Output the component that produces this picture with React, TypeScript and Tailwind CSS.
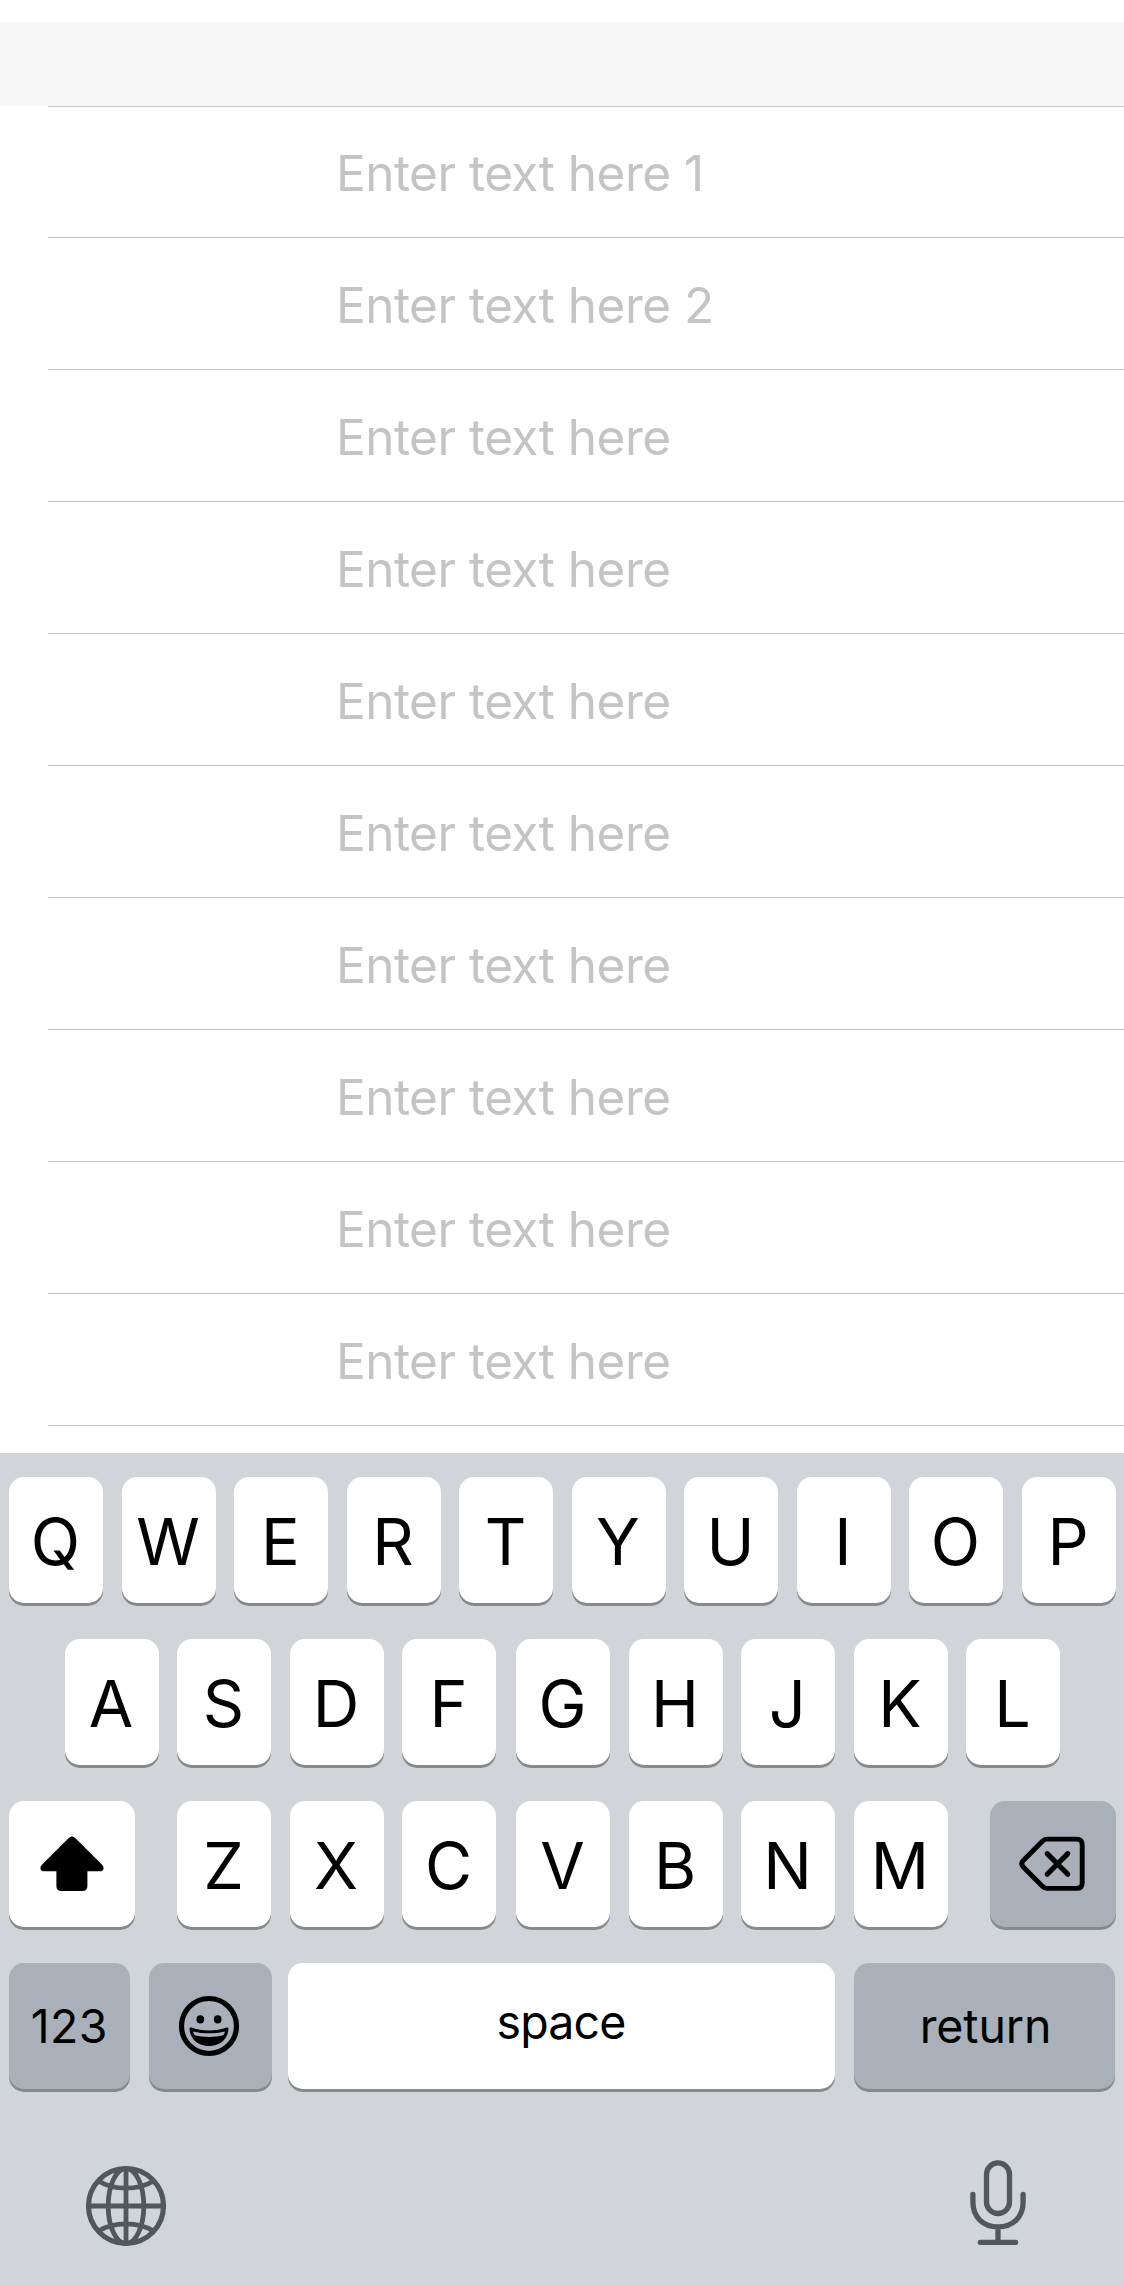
import type { ReactNode } from "react";

const placeholders = [
  "Enter text here 1",
  "Enter text here 2",
  ...Array.from({ length: 8 }, () => "Enter text here"),
];

function Key({
  children,
  className = "",
  dark = false,
}: {
  children: ReactNode;
  className?: string;
  dark?: boolean;
}) {
  return (
    <button
      type="button"
      className={`flex h-[126px] shrink-0 items-center justify-center rounded-[15px] text-black shadow-[0_3px_0_#88898d] ${
        dark ? "bg-[#aab0ba]" : "bg-white"
      } ${className}`}
    >
      {children}
    </button>
  );
}

function Letter({ char, nudge = false }: { char: string; nudge?: boolean }) {
  return (
    <Key className={nudge ? "ml-[1.5px] w-[94px]" : "w-[94px]"}>
      <span className="pt-[4px] pr-px text-[64.5px] leading-none">{char}</span>
    </Key>
  );
}

function ShiftIcon() {
  return (
    <svg width="64" height="56" viewBox="0 0 64 56" className="-ml-px" aria-hidden="true">
      <path d="M28.5 2.2Q32 -1 35.5 2.2L61.8 28.6C65 32 63.5 35.2 60.5 35.2H47.4V50Q47.4 55 42.4 55H21.4Q16.4 55 16.4 50V35.2H3.5C0.5 35.2 -1 32 2.2 28.6Z" />
    </svg>
  );
}

function BackspaceIcon() {
  return (
    <svg
      width="66"
      height="56"
      viewBox="0 0 66 56"
      fill="none"
      stroke="black"
      strokeWidth="4.9"
      strokeLinecap="round"
      strokeLinejoin="round"
      className="-ml-[3px]"
      aria-hidden="true"
    >
      <path d="M28 3.1H57.5Q63.2 3.1 63.2 8.8V46.7Q63.2 52.4 57.5 52.4H28Q25.5 52.4 23.4 50.3L4.3 31Q1.2 27.7 4.3 24.5L23.4 5.2Q25.5 3.1 28 3.1Z" />
      <path d="M28.2 17.6L48.8 38.2M48.8 17.6L28.2 38.2" strokeWidth="5.1" />
    </svg>
  );
}

function EmojiIcon() {
  return (
    <svg width="62" height="62" viewBox="-31 -31 62 62" className="-ml-[2px]" aria-hidden="true">
      <circle r="27.5" fill="none" stroke="black" strokeWidth="5.2" />
      <ellipse cx="-8.7" cy="-6.6" rx="3.8" ry="4.1" />
      <ellipse cx="8.7" cy="-6.6" rx="3.8" ry="4.1" />
      <path
        fillRule="evenodd"
        d="M-17.8 1.6C-7 5.4 7 5.4 17.8 1.6Q19.6 1.3 19.5 3.2C18.5 13.5 11 20 0 20C-11 20 -18.5 13.5 -19.5 3.2Q-19.6 1.3 -17.8 1.6ZM-15.9 5.4Q-15.6 7.5 -14.3 9.3C-6 11.6 6 11.6 14.3 9.3Q15.6 7.5 15.9 5.4C6 8 -6 8 -15.9 5.4Z"
      />
    </svg>
  );
}

function GlobeIcon() {
  return (
    <svg
      width="82"
      height="82"
      viewBox="-41 -41 82 82"
      fill="none"
      stroke="#52565d"
      strokeWidth="4.8"
      aria-hidden="true"
    >
      <circle r="37.5" strokeWidth="5.2" />
      <ellipse rx="17.8" ry="37.5" />
      <path d="M0 -37V37M-37 0H37M-27.5 -25Q-16 -17.8 0 -17.8T27.5 -25M-27.5 25Q-16 17.8 0 17.8T27.5 25" />
    </svg>
  );
}

function MicIcon() {
  return (
    <svg
      width="58"
      height="86"
      viewBox="0 0 58 86"
      fill="none"
      stroke="#52565d"
      strokeWidth="5.3"
      strokeLinecap="round"
      aria-hidden="true"
    >
      <rect x="17.5" y="2.9" width="23" height="50.6" rx="11.5" />
      <path d="M3.9 34.3V42C3.9 57 14 66.8 29 66.8S54.1 57 54.1 42V34.3M29 66.8V82M11.3 82.3H46.7" />
    </svg>
  );
}

export default function App() {
  return (
    <div className="flex h-[2286px] w-[1124px] flex-col overflow-hidden bg-white font-['Inter',sans-serif]">
      <header className="mt-[22px] h-[84px] shrink-0 bg-[#f7f7f7]" />

      <main className="h-[1347px] shrink-0 bg-white">
        <div className="-mb-px ml-12 h-px bg-[#c5c5c7]" />
        {placeholders.map((text, i) => (
          <div
            key={i}
            className="ml-12 flex h-[132px] items-center border-b border-[#c5c5c7] pl-[288px]"
          >
            <input
              aria-label={`Field ${i + 1}`}
              placeholder={text}
              className="w-[700px] bg-transparent pt-[3px] text-[49.5px] leading-[60px] tracking-[-0.53px] outline-none placeholder:text-[#c4c4c6]"
            />
          </div>
        ))}
      </main>

      <section className="flex grow flex-col bg-[#d1d4d9] pt-6">
        <div className="flex flex-col gap-9">
          <div className="flex gap-[18.5px] pl-[9px]">
            {[..."QWERTYUIOP"].map((c) => (
              <Letter key={c} char={c} />
            ))}
          </div>
          <div className="flex gap-[18.5px] pl-[64.5px]">
            {[..."ASDFGHJKL"].map((c) => (
              <Letter key={c} char={c} nudge={c === "G"} />
            ))}
          </div>
          <div className="flex pl-[9px]">
            <Key className="w-[126px]">
              <ShiftIcon />
            </Key>
            <div className="ml-[42px] flex gap-[18.5px]">
              {[..."ZXCVBNM"].map((c) => (
                <Letter key={c} char={c} nudge={c === "V"} />
              ))}
            </div>
            <Key dark className="ml-[42.5px] w-[126px]">
              <BackspaceIcon />
            </Key>
          </div>
          <div className="flex pl-[9px] text-[46.5px] leading-none">
            <Key dark className="w-[120.5px]">
              <span className="pt-px tracking-[0.3px]">123</span>
            </Key>
            <Key dark className="ml-[19px] w-[123px]">
              <EmojiIcon />
            </Key>
            <Key className="ml-[16.5px] w-[547px]">
              <span className="pr-px pb-[8px] tracking-[-0.9px]">space</span>
            </Key>
            <Key dark className="ml-[19px] w-[261px]">
              <span className="pt-px pl-[2px] tracking-[-0.1px]">return</span>
            </Key>
          </div>
        </div>
        <div className="mt-[68px] flex items-start justify-between pr-[97px] pl-[85px]">
          <div className="pt-[7.5px]">
            <GlobeIcon />
          </div>
          <div className="pt-[3px]">
            <MicIcon />
          </div>
        </div>
      </section>
    </div>
  );
}
